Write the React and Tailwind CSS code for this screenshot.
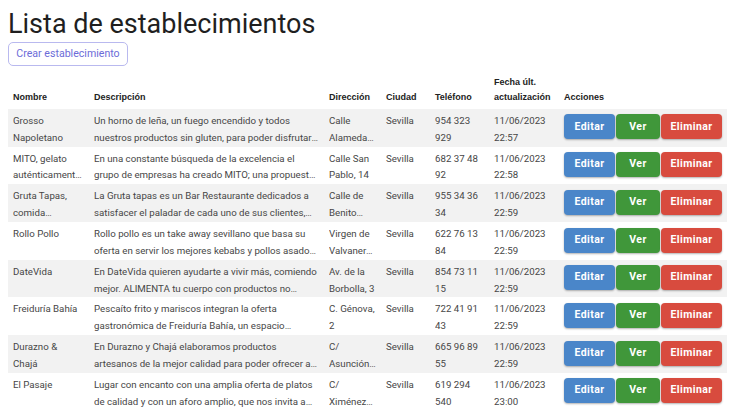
import React from "react";

const rows = [
  ["Grosso Napoletano", "Un horno de leña, un fuego encendido y todos nuestros productos sin gluten, para poder disfrutar de la auténtica pizza napolitana", "Calle Alameda de Hércules", "954 323 929", "22:57"],
  ["MITO, gelato auténticamente italiano", "En una constante búsqueda de la excelencia el grupo de empresas ha creado MITO; una propuesta de helado artesanal", "Calle San Pablo, 14", "682 37 48 92", "22:58"],
  ["Gruta Tapas, comida tradicional", "La Gruta tapas es un Bar Restaurante dedicados a satisfacer el paladar de cada uno de sus clientes, con comida casera", "Calle de Benito Más y Prat", "955 34 36 34", "22:59"],
  ["Rollo Pollo", "Rollo pollo es un take away sevillano que basa su oferta en servir los mejores kebabs y pollos asados de la ciudad", "Virgen de Valvanera, 12", "622 76 13 84", "22:59"],
  ["DateVida", "En DateVida quieren ayudarte a vivir más, comiendo mejor. ALIMENTA tu cuerpo con productos no procesados", "Av. de la Borbolla, 3", "854 73 11 15", "22:59"],
  ["Freiduría Bahía", "Pescaíto frito y mariscos integran la oferta gastronómica de Freiduría Bahía, un espacio familiar", "C. Génova, 2", "722 41 91 43", "22:59"],
  ["Durazno & Chajá", "En Durazno y Chajá elaboramos productos artesanos de la mejor calidad para poder ofrecer a nuestros clientes", "C/ Asunción, 55", "665 96 89 55", "22:59"],
  ["El Pasaje", "Lugar con encanto con una amplia oferta de platos de calidad y con un aforo amplio, que nos invita a disfrutar", "C/ Ximénez de Enciso, 14", "619 294 540", "23:00"],
];

export default function App() {
  return (
    <div className="bg-white px-[8px] pt-[9px] text-[#222]" style={{ fontFamily: "Roboto, sans-serif" }}>
      <h1 className="text-[27px] leading-[31px] text-[#1f1f1f]">Lista de establecimientos</h1>
      <button className="mt-[1px] h-[24px] w-[120px] rounded-[5px] border border-[#b9b9ef] text-[10.6px] text-[#6c6cd8]">
        Crear establecimiento
      </button>
      <table className="mt-[6px] w-[719px] table-fixed border-collapse text-[9.7px]">
        <colgroup>
          <col className="w-[81px]" />
          <col className="w-[235px]" />
          <col className="w-[57px]" />
          <col className="w-[49px]" />
          <col className="w-[59px]" />
          <col className="w-[70px]" />
          <col className="w-[168px]" />
        </colgroup>
        <thead>
          <tr className="text-left align-bottom text-[9px] font-bold text-[#222] leading-[15px]" style={{ fontFamily: "'Liberation Sans', Arial, sans-serif" }}>
            <th className="px-[5px] pb-[4px] pt-[3px]">Nombre</th>
            <th className="px-[5px] pb-[4px] pt-[3px]">Descripción</th>
            <th className="px-[5px] pb-[4px] pt-[3px]">Dirección</th>
            <th className="px-[5px] pb-[4px] pt-[3px]">Ciudad</th>
            <th className="px-[5px] pb-[4px] pt-[3px]">Teléfono</th>
            <th className="px-[5px] pb-[4px] pt-[3px]">Fecha últ. actualización</th>
            <th className="px-[5px] pb-[4px] pt-[3px]">Acciones</th>
          </tr>
        </thead>
        <tbody className="text-[#464646] leading-[16.85px]">
          {rows.map((r, i) => (
            <tr key={i} className={i % 2 === 0 ? "bg-[#f2f2f2] align-top" : "bg-white align-top"}>
              <td className="px-[5px] pt-[4px] pb-0"><div className="line-clamp-2">{r[0]}</div></td>
              <td className="px-[5px] pt-[4px] pb-0"><div className="line-clamp-2">{r[1]}</div></td>
              <td className="px-[5px] pt-[4px] pb-0"><div className="line-clamp-2">{r[2]}</div></td>
              <td className="px-[5px] pt-[4px] pb-0">Sevilla</td>
              <td className="px-[5px] pt-[4px] pb-0"><div className="line-clamp-2">{r[3]}</div></td>
              <td className="px-[5px] pt-[4px] pb-0"><div>11/06/2023</div><div>{r[4]}</div></td>
              <td className="px-[5px] pt-[4px] pb-0">
                <div className="mt-[1.5px] flex gap-[1px] text-[10.5px] font-bold tracking-[0.4px] text-white">
                  <span className="flex h-[25px] w-[51px] items-center justify-center rounded-[4px] bg-[#4a86c9] shadow-[0_1px_2px_rgba(0,0,0,0.3)]">Editar</span>
                  <span className="flex h-[25px] w-[44px] items-center justify-center rounded-[4px] bg-[#40973a] shadow-[0_1px_2px_rgba(0,0,0,0.3)]">Ver</span>
                  <span className="flex h-[25px] w-[61px] items-center justify-center rounded-[4px] bg-[#d84b3e] shadow-[0_1px_2px_rgba(0,0,0,0.3)]">Eliminar</span>
                </div>
              </td>
            </tr>
          ))}
        </tbody>
      </table>
    </div>
  );
}
